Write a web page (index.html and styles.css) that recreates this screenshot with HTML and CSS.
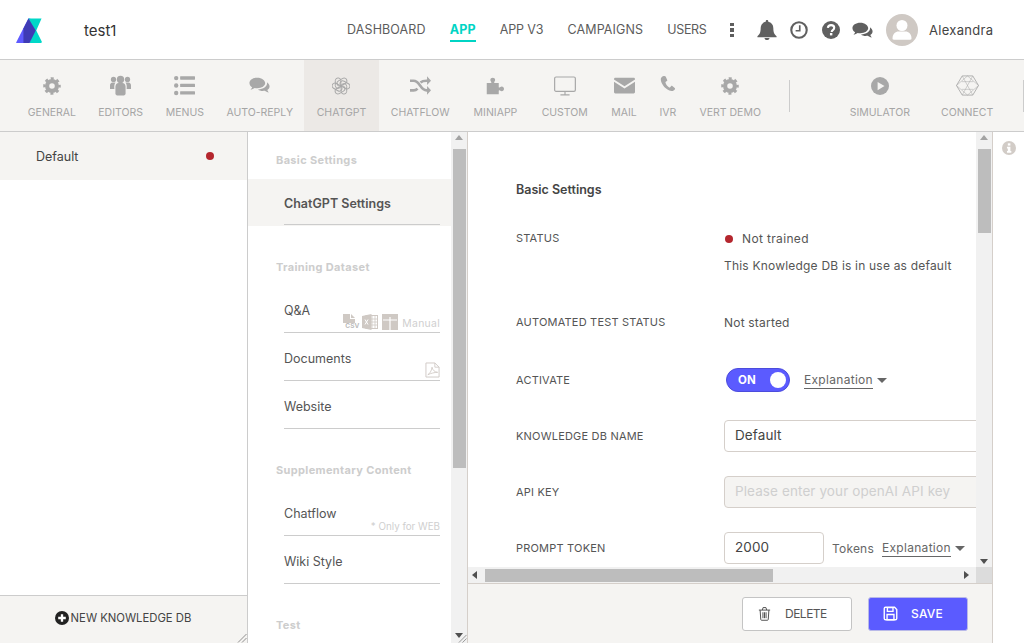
FILE: index.html
```html
<!DOCTYPE html>
<html lang="en">
<head>
<meta charset="utf-8">
<title>ChatGPT Settings</title>
<link rel="stylesheet" href="styles.css">
</head>
<body>
<svg class="defs" width="0" height="0" aria-hidden="true">
  <symbol id="i-gear" viewBox="0 0 24 24">
    <circle cx="12" cy="12" r="6.5" fill="none" stroke="currentColor" stroke-width="5.6"/>
    <circle cx="12" cy="12" r="10" fill="none" stroke="currentColor" stroke-width="3.4" stroke-dasharray="4 3.854" stroke-dashoffset="2"/>
  </symbol>
  <symbol id="i-users" viewBox="0 0 24 24" fill="currentColor">
    <circle cx="4" cy="5" r="3"/><circle cx="20" cy="5" r="3"/><circle cx="12" cy="5" r="4.200"/>
    <path d="M0 16v-4c0-2 1-3.500 3-3.500h3.200C5 10 4.600 13 5 16H0zM24 16v-4c0-2-1-3.500-3-3.500h-3.200C19 10 19.400 13 19 16H24z"/>
    <path d="M6.200 13.500c0-3 1.600-4.500 3.500-4.500h4.600c1.900 0 3.500 1.500 3.500 4.500v8c0 1-1 1.800-2 1.800H8.200c-1 0-2-.8-2-1.800z"/>
  </symbol>
  <symbol id="i-list" viewBox="0 0 24 24" fill="currentColor">
    <circle cx="2.500" cy="3.500" r="2.500"/><circle cx="2.500" cy="12" r="2.500"/><circle cx="2.500" cy="20.500" r="2.500"/>
    <rect x="7" y="1.500" width="17" height="3.800" rx=".6"/><rect x="7" y="10" width="17" height="3.800" rx=".6"/><rect x="7" y="18.500" width="17" height="3.800" rx=".6"/>
  </symbol>
  <symbol id="i-comments" viewBox="0 0 24 24" fill="currentColor">
    <path d="M9.500 3C4.300 3 .5 5.700.5 9.200c0 2 1.200 3.700 3.100 4.800-.3 1-1 1.900-1.900 2.700 1.800-.2 3.500-.9 4.800-1.900 1 .2 1.900.3 3 .3 5.200 0 9-2.700 9-5.900S14.700 3 9.500 3z"/>
    <path d="M20.600 8.300c.1.300.1.600.1.900 0 4-4.200 7-10.400 7.300 1.300 1.100 3.200 1.700 5.400 1.700.8 0 1.600-.1 2.300-.2 1.200.9 2.700 1.700 4.600 2-.7-.8-1.300-1.700-1.700-2.800 1.700-1 2.600-2.400 2.600-4 0-1.900-1.100-3.600-2.900-4.900z"/>
  </symbol>
  <symbol id="i-openai" viewBox="-12 -12 24 24">
    <g fill="none" stroke="currentColor" stroke-width="1.300">
      <rect x="-7.600" y="-10.800" width="7.400" height="14" rx="3.700"/>
      <rect x="-7.600" y="-10.800" width="7.400" height="14" rx="3.700" transform="rotate(60)"/>
      <rect x="-7.600" y="-10.800" width="7.400" height="14" rx="3.700" transform="rotate(120)"/>
      <rect x="-7.600" y="-10.800" width="7.400" height="14" rx="3.700" transform="rotate(180)"/>
      <rect x="-7.600" y="-10.800" width="7.400" height="14" rx="3.700" transform="rotate(240)"/>
      <rect x="-7.600" y="-10.800" width="7.400" height="14" rx="3.700" transform="rotate(300)"/>
    </g>
  </symbol>
  <symbol id="i-shuffle" viewBox="0 0 24 24">
    <path d="M0 6.500h4c4 0 5.500 2.500 7.500 5.500s3.500 5.500 7.500 5.500h1.500M0 17.500h4c2.200 0 3.500-.8 4.600-2M12 8.500c1.500-1.400 3.200-2 7-2h1.500" fill="none" stroke="currentColor" stroke-width="3"/>
    <path d="M19.500 1.500 24 6.500l-4.500 5zM19.500 12.500 24 17.500l-4.500 5z" fill="currentColor"/>
  </symbol>
  <symbol id="i-puzzle" viewBox="0 0 24 24" fill="currentColor">
    <path d="M1 8h5.500c1 0 1-.8.300-1.600C6 5.400 5.800 4.800 5.800 4c0-1.800 1.500-3 3.200-3s3.200 1.200 3.200 3c0 .8-.3 1.400-1 2.400-.6.800-.6 1.600.4 1.600H17v5.300c0 1 .8 1 1.600.3 1-.8 1.600-1 2.400-1 1.800 0 3 1.400 3 3.100S22.800 19 21 19c-.8 0-1.400-.3-2.400-1-.8-.7-1.600-.6-1.600.4V23H1z"/>
  </symbol>
  <symbol id="i-desktop" viewBox="0 0 24 24">
    <rect x=".7" y="2.200" width="22.600" height="15.600" rx="1.500" fill="none" stroke="currentColor" stroke-width="1.300"/>
    <path d="M12 18v3.500M7 21.700h10" fill="none" stroke="currentColor" stroke-width="1.300"/>
  </symbol>
  <symbol id="i-mail" viewBox="0 0 24 24">
    <path d="M1.500 3h21c.8 0 1.500.7 1.500 1.500v.7L12 12.800 0 5.200v-.7C0 3.700.7 3 1.500 3z" fill="currentColor"/>
    <path d="M0 7.800 12 15.500l12-7.700v11.700c0 .8-.7 1.500-1.500 1.500h-21C.7 21 0 20.300 0 19.500z" fill="currentColor"/>
  </symbol>
  <symbol id="i-phone" viewBox="0 0 24 24" fill="currentColor">
    <path d="M6.500 1.500c-2.500.8-4.500 2.500-3.900 6 1 6 7 14 15 15 2 .2 3.800-.6 4.900-2.500.4-.7.300-1.300-.3-1.800l-3.400-2.600c-.6-.4-1.300-.4-1.800.2l-1.300 1.500c-.4.400-.8.500-1.300.2-2.400-1.500-4.300-4-5.200-6.700-.2-.5 0-.9.400-1.200l1.500-1c.6-.4.800-1 .5-1.700L9.600 2.400c-.4-.8-1.600-1.300-3.100-.9z"/>
  </symbol>
  <symbol id="i-play" viewBox="0 0 24 24">
    <circle cx="12" cy="12" r="12" fill="currentColor"/>
    <path d="M8.800 6.500 18 12l-9.200 5.500z" fill="#f5f4f2"/>
  </symbol>
  <symbol id="i-connect" viewBox="0 0 24 24">
    <path d="M6.500 2h11L23.500 12l-6 10h-11L.5 12z" fill="none" stroke="currentColor" stroke-width=".9"/>
    <path d="M.5 12 12 22 23.500 12 12 2zM6.500 2 17.500 22M17.500 2 6.500 22M6 8h12M6 16h12" fill="none" stroke="currentColor" stroke-width=".55"/>
  </symbol>
  <symbol id="i-bell" viewBox="0 0 24 24" fill="currentColor">
    <path d="M12 0c.9 0 1.500.6 1.500 1.500v.7c3.800.7 6.100 3.700 6.100 7.600 0 5.300 1.300 7.300 3.900 9.700v1.100H.5v-1.100c2.600-2.400 3.900-4.400 3.900-9.700 0-3.900 2.300-6.900 6.100-7.600v-.7C10.500.6 11.100 0 12 0z"/>
    <path d="M9 21.500h6c0 1.500-1.300 2.500-3 2.500s-3-1-3-2.500z"/>
  </symbol>
  <symbol id="i-clock" viewBox="0 0 24 24">
    <circle cx="12" cy="12" r="10.300" fill="none" stroke="currentColor" stroke-width="2.800"/>
    <path d="M13 5.500v7.500H7.500" fill="none" stroke="currentColor" stroke-width="2.200"/>
  </symbol>
  <symbol id="i-help" viewBox="0 0 24 24">
    <circle cx="12" cy="12" r="12" fill="currentColor"/>
    <path d="M7.800 9.200c.3-2.400 2-3.700 4.300-3.700 2.400 0 4.200 1.500 4.200 3.600 0 3.200-3.400 3-3.400 5.500" fill="none" stroke="#fff" stroke-width="2.800"/>
    <rect x="10.600" y="16" width="3.200" height="3.200" fill="#fff"/>
  </symbol>
  <symbol id="i-user" viewBox="0 0 32 32">
    <circle cx="16" cy="16" r="16" fill="#cfc9c4"/>
    <circle cx="16" cy="11.500" r="5.500" fill="#fff"/>
    <path d="M6.500 24.500c0-4.800 3-7 6-7h7c3 0 6 2.200 6 7 0 .8-.6 1.200-1.300 1.200H7.800c-.7 0-1.300-.4-1.300-1.200z" fill="#fff"/>
  </symbol>
  <symbol id="i-plus" viewBox="0 0 24 24">
    <circle cx="12" cy="12" r="12" fill="currentColor"/>
    <path d="M10 5.500h4V10h4.500v4H14v4.500h-4V14H5.500v-4H10z" fill="#fff"/>
  </symbol>
  <symbol id="i-info" viewBox="0 0 24 24">
    <circle cx="12" cy="12" r="12" fill="currentColor"/>
    <rect x="10" y="4" width="4.400" height="3.800" fill="#fff"/>
    <path d="M8.500 10h5.900v7.200H16V20H8.500v-2.800H10v-4.400H8.500z" fill="#fff"/>
  </symbol>
  <symbol id="i-trash" viewBox="0 0 24 24">
    <path d="M3 6.500h18M5 6.500l1 15c0 .8.500 1.300 1.200 1.300h9.600c.7 0 1.200-.5 1.200-1.300l1-15M8.500 6.500l1.200-4h4.600l1.200 4M9.500 10v9.500M12 10v9.500M14.500 10v9.500" fill="none" stroke="currentColor" stroke-width="1.600"/>
  </symbol>
  <symbol id="i-save" viewBox="0 0 24 24">
    <path d="M2 4c0-1.200.8-2 2-2h14.500L22 5.500V20c0 1.200-.8 2-2 2H4c-1.200 0-2-.8-2-2z" fill="none" stroke="currentColor" stroke-width="2.200"/>
    <path d="M7 2.500h9v6H7zM6.500 13.500h11V22h-11z" fill="none" stroke="currentColor" stroke-width="2.200"/>
  </symbol>
  <symbol id="i-grip" viewBox="0 0 10 10">
    <path d="M1 9.500 9.500 1M5 9.500 9.500 5" fill="none" stroke="#777" stroke-width=".8"/>
  </symbol>
</svg>

<header class="topbar">
  <div class="brand">
    <svg class="logo" viewBox="0 0 28 28" aria-hidden="true">
      <path d="M.3 26.200 12.800 1.500h2L14 27H2c-1.500 0-2.300-.5-1.700-.8z" fill="#5f5bff"/>
      <path d="M12.800 1.500h13.700L21 14l5.700 11.500c.4.900-.1 1.500-1 1.500H14l4-13z" fill="#00d8c8"/>
      <path d="M13 1.500 20.500 14 14 27l-6.300-.1V12z" fill="#3f3bb5"/>
    </svg>
    <span class="app-name">test1</span>
  </div>
  <nav class="main-nav">
    <a class="nav-link">DASHBOARD</a>
    <a class="nav-link is-active">APP</a>
    <a class="nav-link tight">APP V3</a>
    <a class="nav-link">CAMPAIGNS</a>
    <a class="nav-link tighter">USERS</a>
    <span class="kebab"><i></i><i></i><i></i></span>
  </nav>
  <div class="top-icons">
    <svg class="ti ti-bell"><use href="#i-bell"/></svg>
    <svg class="ti ti-clock"><use href="#i-clock"/></svg>
    <svg class="ti ti-help"><use href="#i-help"/></svg>
    <svg class="ti ti-comments"><use href="#i-comments"/></svg>
    <svg class="avatar"><use href="#i-user"/></svg>
    <span class="username">Alexandra</span>
  </div>
</header>

<div class="toolbar">
  <a class="tool t-general"><svg class="ticon"><use href="#i-gear"/></svg><span>GENERAL</span></a>
  <a class="tool t-editors"><svg class="ticon"><use href="#i-users"/></svg><span>EDITORS</span></a>
  <a class="tool t-menus"><svg class="ticon"><use href="#i-list"/></svg><span>MENUS</span></a>
  <a class="tool t-auto"><svg class="ticon"><use href="#i-comments"/></svg><span>AUTO-REPLY</span></a>
  <a class="tool t-gpt is-current"><svg class="ticon"><use href="#i-openai"/></svg><span>CHATGPT</span></a>
  <a class="tool t-flow"><svg class="ticon"><use href="#i-shuffle"/></svg><span>CHATFLOW</span></a>
  <a class="tool t-mini"><svg class="ticon"><use href="#i-puzzle"/></svg><span>MINIAPP</span></a>
  <a class="tool t-custom"><svg class="ticon"><use href="#i-desktop"/></svg><span>CUSTOM</span></a>
  <a class="tool t-mail"><svg class="ticon"><use href="#i-mail"/></svg><span>MAIL</span></a>
  <a class="tool t-ivr"><svg class="ticon"><use href="#i-phone"/></svg><span>IVR</span></a>
  <a class="tool t-vert"><svg class="ticon"><use href="#i-gear"/></svg><span>VERT DEMO</span></a>
  <span class="tool-divider"></span>
  <a class="tool t-sim"><svg class="ticon"><use href="#i-play"/></svg><span>SIMULATOR</span></a>
  <a class="tool t-conn"><svg class="ticon"><use href="#i-connect"/></svg><span>CONNECT</span></a>
  <span class="tool-divider last"></span>
</div>

<div class="workspace">
  <aside class="kb-panel">
    <div class="kb-list">
      <div class="kb-item"><span>Default</span><i class="dot"></i></div>
    </div>
    <div class="kb-footer">
      <svg class="plus"><use href="#i-plus"/></svg><span>NEW KNOWLEDGE DB</span>
      <svg class="grip"><use href="#i-grip"/></svg>
    </div>
  </aside>

  <section class="menu-panel">
    <div class="menu-scroll">
      <h3 class="menu-head first">Basic Settings</h3>
      <div class="menu-item is-selected"><div class="menu-line"><span class="menu-text">ChatGPT Settings</span></div></div>
      <h3 class="menu-head">Training Dataset</h3>
      <div class="menu-item"><div class="menu-line"><span class="menu-text">Q&amp;A</span>
        <span class="meta">
          <span class="m-file"><svg viewBox="0 0 16 16"><path d="M2 0h7v5h5v4H2zM10 0l4 4h-4z" fill="currentColor"/></svg><b class="csv">CSV</b></span>
          <svg class="m-xls" viewBox="0 0 16 16"><rect x="4" y="1.500" width="11.500" height="13" fill="none" stroke="currentColor"/><path d="M7 1v14M10 1v14M13 1v14M4 5h12M4 8h12M4 11h12" stroke="currentColor" stroke-width=".8"/><path d="M0 2 9.500 0v16L0 14z" fill="currentColor"/><path d="M3 5.500 6 10.500M6 5.500 3 10.500" stroke="#fff"/></svg>
          <svg class="m-t" viewBox="0 0 16 16"><rect width="16" height="16" fill="currentColor"/><path d="M1 6h14M8 3v13" stroke="#fff" stroke-width="1.200"/></svg>
          <em class="manual">Manual</em>
        </span></div></div>
      <div class="menu-item"><div class="menu-line"><span class="menu-text">Documents</span>
        <span class="meta"><svg class="m-pdf" viewBox="0 0 16 16"><path d="M1 .5h9.500l4.500 4.500v10.500H1z" fill="none" stroke="currentColor"/><path d="M10.500.5V5H15M3 13c2-1 4-4 4.500-8 .5 3 2.500 5 6 5.500-3.500 0-7 1-10.500 2.500z" fill="none" stroke="currentColor" stroke-width=".9"/></svg></span></div></div>
      <div class="menu-item"><div class="menu-line"><span class="menu-text">Website</span></div></div>
      <h3 class="menu-head">Supplementary Content</h3>
      <div class="menu-item"><div class="menu-line"><span class="menu-text">Chatflow</span><span class="meta"><em class="web-only">* Only for WEB</em></span></div></div>
      <div class="menu-item"><div class="menu-line"><span class="menu-text">Wiki Style</span></div></div>
      <h3 class="menu-head">Test</h3>
    </div>
    <div class="vbar">
      <span class="arr up"></span>
      <span class="thumb menu-thumb"></span>
      <span class="arr down"></span>
      <svg class="grip small"><use href="#i-grip"/></svg>
    </div>
  </section>

  <main class="detail">
    <div class="detail-view">
      <div class="detail-scroll">
        <div class="form">
          <h2 class="form-title">Basic Settings</h2>
          <div class="row row-status">
            <label class="lbl">STATUS</label>
            <div class="val">
              <div class="status-line"><i class="dot"></i><span>Not trained</span></div>
              <div class="status-note">This Knowledge DB is in use as default</div>
            </div>
          </div>
          <div class="row row-test">
            <label class="lbl">AUTOMATED TEST STATUS</label>
            <div class="val">Not started</div>
          </div>
          <div class="row row-activate">
            <label class="lbl">ACTIVATE</label>
            <div class="val inline">
              <span class="switch"><b>ON</b><i></i></span>
              <span class="explain">Explanation</span><i class="caret"></i>
            </div>
          </div>
          <div class="row row-input">
            <label class="lbl">KNOWLEDGE DB NAME</label>
            <div class="val"><input class="field wide" value="Default"></div>
          </div>
          <div class="row row-input">
            <label class="lbl">API KEY</label>
            <div class="val"><input class="field wide" placeholder="Please enter your openAI API key" disabled></div>
          </div>
          <div class="row row-input">
            <label class="lbl">PROMPT TOKEN</label>
            <div class="val inline">
              <input class="field short" value="2000">
              <span class="unit">Tokens</span>
              <span class="explain">Explanation</span><i class="caret"></i>
            </div>
          </div>
        </div>
      </div>
      <div class="vbar detail-v">
        <span class="arr up"></span>
        <span class="thumb detail-thumb"></span>
        <span class="arr down"></span>
      </div>
    </div>
    <div class="hbar">
      <span class="arr left"></span>
      <span class="hthumb"></span>
      <span class="arr right"></span>
      <span class="corner"></span>
    </div>
    <div class="actions">
      <button class="btn btn-del"><svg><use href="#i-trash"/></svg><span>DELETE</span></button>
      <button class="btn btn-save"><svg><use href="#i-save"/></svg><span>SAVE</span></button>
    </div>
  </main>

  <aside class="side">
    <svg class="info"><use href="#i-info"/></svg>
  </aside>
</div>
</body>
</html>
```
FILE: styles.css
```css
* { box-sizing: border-box; }
html, body { margin: 0; height: 100%; }
body {
  width: 1024px; height: 643px; overflow: hidden; background: #fff;
  font-family: "Inter", "Open Sans", sans-serif; color: #555;
  display: flex; flex-direction: column;
}
.defs { position: absolute; }
svg { display: block; flex: none; }
i, em { font-style: normal; }

/* top bar */
.topbar { height: 60px; flex: none; display: flex; align-items: center; border-bottom: 1px solid #ccc; padding-top: 1px; }
.brand { display: flex; align-items: center; width: 347px; padding-left: 16px; }
.logo { width: 27px; height: 27px; }
.app-name { margin-left: 41px; font-size: 15px; color: #333; }
.main-nav { display: flex; align-items: center; gap: 24px; width: 410px; height: 100%; }
.nav-link { font-size: 12.500px; color: #5c5c5c; letter-spacing: .13px; white-space: nowrap; height: 24px; line-height: 23px; }
.nav-link.tight { letter-spacing: -.1px; }
.nav-link.tighter { letter-spacing: -.35px; }
.nav-link.is-active { color: #00d4c4; font-weight: 700; border-bottom: 2px solid #00d4c4; }
.kebab { display: flex; flex-direction: column; gap: 2px; }
.kebab i { width: 4px; height: 3.500px; background: #5e5e5e; display: block; }
.top-icons { display: flex; align-items: center; color: #606060; }
.ti { height: 18px; width: 18px; }
.ti-bell { width: 20px; height: 20px; }
.ti-clock { margin-left: 13px; }
.ti-help { margin-left: 14px; }
.ti-comments { margin-left: 12px; width: 21px; height: 21px; }
.avatar { width: 32px; height: 32px; margin-left: 13px; }
.username { margin-left: 11px; font-size: 13px; color: #444; letter-spacing: .3px; }

/* toolbar */
.toolbar { height: 72px; flex: none; background: #f5f4f2; border-bottom: 1px solid #ccc; display: flex; align-items: stretch; padding-left: 17px; }
.tool { display: flex; flex-direction: column; align-items: center; font-size: 10.500px; color: #a5a5a5; white-space: nowrap; padding-top: 15px; }
.tool span { margin-top: 10px; line-height: 14px; }
.ticon { width: 21px; height: 21px; color: #a8a8a8; }
.t-general .ticon, .t-vert .ticon, .t-gpt .ticon, .t-mini .ticon, .t-sim .ticon { width: 18px; height: 18px; margin: 1.500px 0; }
.t-ivr .ticon { width: 17px; height: 17px; margin: 0 0 4px; }
.t-conn .ticon { width: 23px; height: 23px; margin: -1px 0; }
.t-custom .ticon { width: 22px; height: 22px; margin: -.5px 0; }
.t-general { width: 70px; } .t-editors { width: 68px; } .t-menus { width: 61px; }
.t-auto { width: 89px; } .t-gpt { width: 75px; } .t-flow { width: 83px; }
.t-mini { width: 68px; } .t-custom { width: 71px; } .t-mail { width: 48px; }
.t-ivr { width: 40px; } .t-vert { width: 85px; }
.t-sim { width: 95px; margin-left: 43px; } .t-conn { width: 80px; }
.is-current { background: #ece9e6; }
.tool-divider { width: 1px; height: 32px; background: #ccc; margin: 20px 0 0 16px; }

/* workspace */
.workspace { flex: 1; display: flex; min-height: 0; }

.kb-panel { width: 248px; flex: none; display: flex; flex-direction: column; border-right: 1px solid #ccc; }
.kb-list { flex: 1; }
.kb-item { height: 48px; background: #f5f4f2; display: flex; align-items: center; justify-content: space-between; padding: 0 33px 0 36px; font-size: 12.500px; color: #444; }
.dot { display: block; width: 8px; height: 8px; border-radius: 50%; background: #b4262e; }
.kb-footer { height: 48px; position: relative; background: #f5f4f2; border-top: 1px solid #ccc; display: flex; align-items: center; justify-content: center; font-size: 11.300px; color: #444; gap: 2px; padding-bottom: 4px; padding-right: 1px; }
.plus { width: 14px; height: 14px; color: #222; }
.grip { position: absolute; right: 0; bottom: 0; width: 10px; height: 10px; }

.menu-panel { width: 220px; flex: none; display: flex; border-right: 1px solid #d5cfca; }
.menu-scroll { width: 203px; flex: none; overflow: hidden; }
.menu-head { margin: 33px 0 10px 28px; height: 16px; line-height: 16px; font-size: 11px; font-weight: 700; color: #cdcdcd; white-space: nowrap; letter-spacing: .35px; }
.menu-head.first { margin-top: 20px; margin-bottom: 11px; }
.menu-item { height: 48px; padding: 0 11px 0 36px; }
.menu-item.is-selected { height: 47px; background: #f5f4f2; }
.menu-item.is-selected .menu-line { height: 46px; }
.menu-line { height: 48px; border-bottom: 1px solid #ccc; display: flex; justify-content: space-between; }
.menu-text { font-size: 12.500px; line-height: 18px; margin-top: 17px; color: #555; white-space: nowrap; }
.menu-item.is-selected .menu-text { font-weight: 600; color: #555; margin-top: 16px; }
.meta { display: flex; align-items: flex-end; padding-bottom: 2px; color: #cfc9c4; }
.meta em { color: #cfcfcf; line-height: 12px; white-space: nowrap; }
.manual { font-size: 10.400px; letter-spacing: .3px; margin-left: 4px; }
.web-only { font-size: 9.800px; }
.m-file { width: 16px; height: 16px; position: relative; display: block; }
.m-file svg { width: 16px; height: 16px; }
.csv { position: absolute; left: 4px; bottom: 0; font-size: 6.500px; line-height: 7px; font-weight: 700; color: #bbb; letter-spacing: 0; }
.m-xls { width: 16px; height: 16px; margin-left: 5px; }
.m-t { width: 16px; height: 16px; margin-left: 4px; }
.m-pdf { width: 15px; height: 16px; }

.vbar { position: relative; width: 16px; flex: none; background: #f1f1f1; display: flex; flex-direction: column; align-items: center; padding-top: 17px; }
.thumb { width: 13px; background: #bdbdbd; display: block; }
.menu-thumb { height: 319px; }
.detail-thumb { height: 84px; }
.arr { position: absolute; width: 0; height: 0; border: 4px solid transparent; }
.arr.up { top: 3px; left: 4px; border-bottom: 5px solid #a3a3a3; border-top: 0; }
.arr.down { bottom: 3px; left: 4px; border-top: 5px solid #505050; border-bottom: 0; }
.grip.small { right: 0; bottom: 0; width: 9px; height: 9px; }
.menu-panel .arr.down { bottom: 5px; }

.detail { width: 525px; flex: none; display: flex; flex-direction: column; border-right: 1px solid #d5cfca; }
.detail-view { height: 435px; flex: none; display: flex; }
.detail-scroll { width: 508px; flex: none; overflow: hidden; }
.form { padding: 49px 0 0 48px; width: 800px; }
.form-title { margin: 0 0 31px; font-size: 12.500px; line-height: 18px; font-weight: 600; color: #444; }
.row { display: flex; }
.lbl { width: 208px; flex: none; font-size: 11px; color: #555; letter-spacing: .2px; }
.val { font-size: 12px; color: #555; letter-spacing: .2px; }
.inline { display: flex; align-items: center; }
.row-status .lbl { line-height: 16px; }
.status-line { display: flex; align-items: center; line-height: 18px; }
.status-line .dot { margin-left: 1px; }
.status-line span { margin-left: 9px; letter-spacing: .35px; }
.status-note { margin-top: 9px; line-height: 18px; }
.row-test { margin-top: 39px; line-height: 18px; }
.row-test .lbl { line-height: 16px; }
.row-activate { margin-top: 36px; height: 24px; align-items: center; }
.switch { margin-left: 2px; width: 64px; height: 24px; border-radius: 12px; background: #5b5bff; border: 1px solid #4c4cdc; display: flex; align-items: center; justify-content: space-between; padding: 0 3px 0 11px; color: #fff; }
.switch b { font-size: 11.500px; font-weight: 700; }
.switch i { width: 16px; height: 16px; border-radius: 50%; background: #fff; }
.explain { margin-left: 14px; font-size: 12px; line-height: 17px; color: #666; border-bottom: 1px solid #666; letter-spacing: .3px; }
.caret { margin-left: 4px; width: 0; height: 0; border: 5px solid transparent; border-top: 5px solid #666; border-bottom: 0; }
.row-input { height: 32px; align-items: center; margin-top: 24px; }
.row-activate + .row-input { margin-top: 28px; }
.field { height: 32px; border: 1px solid #d5cfca; border-radius: 4px; padding: 0 10px 2px; font: inherit; font-size: 13.500px; color: #444; background: #fff; outline: 0; letter-spacing: .1px; }
.field.wide { width: 400px; }
.field.short { width: 100px; }
.field:disabled { background: #f5f4f2; }
.field::placeholder { color: #cfcfcf; opacity: 1; }
.unit { margin-left: 8px; font-size: 12px; color: #666; }
.unit + .explain { margin-left: 8px; }

.hbar { height: 16px; flex: none; background: #f1f1f1; position: relative; padding-left: 17px; display: flex; align-items: center; }
.hthumb { width: 288px; height: 13px; background: #bdbdbd; display: block; }
.arr.left { left: 4px; top: 4px; border-right: 5px solid #505050; border-left: 0; }
.arr.right { left: 496px; top: 4px; border-left: 5px solid #505050; border-right: 0; }
.corner { position: absolute; right: 0; top: 0; width: 16px; height: 16px; background: #dcdcdc; }

.actions { flex: 1; background: #f5f4f2; border-top: 1px solid #d5cfca; display: flex; align-items: center; justify-content: flex-end; padding: 0 24px 0 0; gap: 16px; }
.btn { height: 34px; border-radius: 3px; font: inherit; font-size: 12px; display: flex; align-items: center; padding: 0; letter-spacing: .2px; }
.btn-del { width: 110px; background: #fff; border: 1px solid #c4c4c4; color: #555; padding-left: 14px; gap: 13px; letter-spacing: -.5px; }
.btn-del svg { width: 15px; height: 15px; }
.btn-save { width: 100px; background: #5b5bff; border: 1px solid #b9b9e8; color: #fff; font-weight: 500; padding-left: 14px; gap: 13px; }
.btn-save svg { width: 15px; height: 15px; }

.side { flex: 1; padding: 9px 0 0 9px; }
.info { width: 14px; height: 14px; color: #d2ccc7; }
```
